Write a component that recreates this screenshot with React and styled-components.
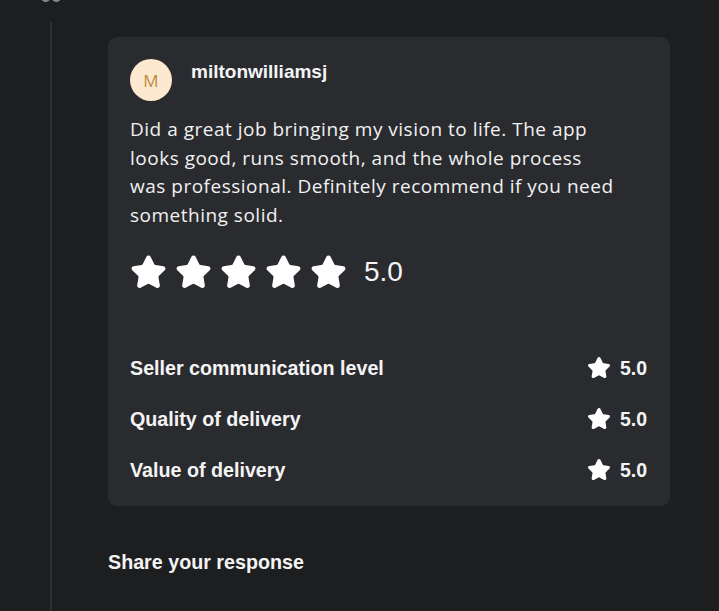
import React from "react";
import styled, { createGlobalStyle } from "styled-components";
import { Star } from "lucide-react";

const GlobalStyle = createGlobalStyle`
  html, body {
    margin: 0;
    padding: 0;
    background: #1d1e20;
  }
  body {
    font-family: "Open Sans", "Liberation Sans", sans-serif;
    color: #f4f4f5;
  }
`;

const Page = styled.div`
  display: flex;
  min-height: 611px;
  overflow: hidden;
`;

const Gutter = styled.div`
  width: 108px;
  flex-shrink: 0;
  display: flex;
  flex-direction: column;
  align-items: center;
  padding-right: 7px;
  box-sizing: border-box;
`;

const Glyph = styled.div`
  margin-top: -19px;
  height: 22px;
  width: 26px;
  color: #85868a;
  display: flex;
  justify-content: center;
`;

const Line = styled.div`
  flex: 1;
  width: 2px;
  margin-top: 19px;
  background: #2e2f32;
`;

const Content = styled.div`
  width: 562px;
  padding-top: 37px;
`;

const Card = styled.div`
  background: #2a2b2f;
  border-radius: 9px;
  padding: 22px 22px 21px;
`;

const Header = styled.div`
  display: flex;
  align-items: flex-start;
  gap: 19px;
`;

const Avatar = styled.div`
  width: 42px;
  height: 42px;
  border-radius: 50%;
  background: #fde9cf;
  color: #c08a3e;
  display: flex;
  align-items: center;
  justify-content: center;
  font-size: 17px;
  font-weight: 400;
`;

const Name = styled.div`
  font-family: "Liberation Sans", Arial, sans-serif;
  font-size: 19px;
  font-weight: 700;
  margin-top: 2px;
`;

const Body = styled.p`
  margin: 14px 0 0;
  max-width: 492px;
  font-size: 19px;
  line-height: 28.7px;
  letter-spacing: 0.5px;
  font-weight: 400;
  color: #f1f1f2;
`;

const Rating = styled.div`
  display: flex;
  align-items: center;
  gap: 8px;
  margin-top: 24px;
`;

const BigScore = styled.span`
  font-family: "Liberation Sans", Arial, sans-serif;
  font-size: 28px;
  margin-left: 9px;
  font-weight: 400;
`;

const Rows = styled.div`
  margin-top: 63px;
  display: flex;
  flex-direction: column;
  gap: 22px;
`;

const Row = styled.div`
  display: flex;
  align-items: center;
  justify-content: space-between;
  height: 29px;
`;

const Label = styled.span`
  font-family: "Liberation Sans", Arial, sans-serif;
  font-size: 19.7px;
  font-weight: 700;
`;

const Score = styled.span`
  display: flex;
  align-items: center;
  gap: 9px;
  font-family: "Liberation Sans", Arial, sans-serif;
  font-size: 19.5px;
  font-weight: 700;
  margin-right: 1px;
`;

const Share = styled.div`
  margin-top: 45px;
  font-family: "Liberation Sans", Arial, sans-serif;
  font-size: 19.7px;
  font-weight: 700;
`;

const categories = [
  "Seller communication level",
  "Quality of delivery",
  "Value of delivery",
];

export default function App() {
  return (
    <>
      <GlobalStyle />
      <Page>
        <Gutter>
          <Glyph>
            <svg width="26" height="22" viewBox="0 0 26 22">
              <path
                d="M3 12 C3 20 9 21 11 17 M23 12 C23 20 17 21 15 17"
                stroke="currentColor"
                strokeWidth="3"
                fill="none"
                strokeLinecap="round"
              />
            </svg>
          </Glyph>
          <Line />
        </Gutter>
        <Content>
          <Card>
            <Header>
              <Avatar>M</Avatar>
              <Name>miltonwilliamsj</Name>
            </Header>
            <Body>
              Did a great job bringing my vision to life. The app looks good,
              runs smooth, and the whole process was professional. Definitely
              recommend if you need something solid.
            </Body>
            <Rating>
              {[0, 1, 2, 3, 4].map((i) => (
                <Star key={i} size={37} fill="#fff" color="#fff" strokeWidth={2} />
              ))}
              <BigScore>5.0</BigScore>
            </Rating>
            <Rows>
              {categories.map((c) => (
                <Row key={c}>
                  <Label>{c}</Label>
                  <Score>
                    <Star size={24} fill="#fff" color="#fff" strokeWidth={2} />
                    5.0
                  </Score>
                </Row>
              ))}
            </Rows>
          </Card>
          <Share>Share your response</Share>
        </Content>
      </Page>
    </>
  );
}
